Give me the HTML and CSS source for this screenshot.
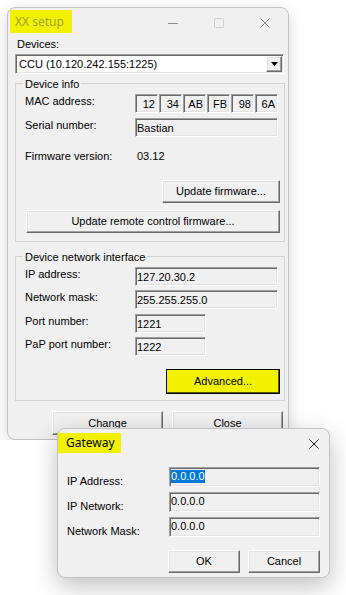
FILE: index.html
```html
<!DOCTYPE html>
<html lang="en">
<head>
  <title>XX setup</title>
  <meta charset="utf-8">
  <meta name="viewport" content="width=device-width, initial-scale=1">
  <link rel="stylesheet" href="styles.css">
</head>
<body>
  <div class="window setup">
    <div class="titlebar">
      <span class="title">XX setup</span>
      <span class="caption-buttons">
        <span class="caption-button">
          <svg width="10" height="10" viewBox="0 0 10 10"><path d="M0 5.5H10" stroke="#8c8c8c" stroke-width="1"/></svg>
        </span>
        <span class="caption-button">
          <svg width="10" height="10" viewBox="0 0 10 10"><rect x="0.5" y="0.5" width="9" height="9" rx="1" fill="none" stroke="#cfcfcf"/></svg>
        </span>
        <span class="caption-button">
          <svg width="10" height="10" viewBox="0 0 10 10"><path d="M0.5 0.5L9.5 9.5M9.5 0.5L0.5 9.5" stroke="#8c8c8c" stroke-width="1"/></svg>
        </span>
      </span>
    </div>

    <div class="content">
      <div class="devices-label">Devices:</div>
      <div class="combo">
        <span class="combo-value">CCU (10.120.242.155:1225)</span>
        <span class="combo-button">
          <svg width="7" height="4" viewBox="0 0 7 4"><path d="M0 0H7L3.5 4Z" fill="#000"/></svg>
        </span>
      </div>

      <div class="group">
        <div class="group-title">Device info</div>
        <div class="row first">
          <span class="label">MAC address:</span>
          <div class="mac">
            <span class="field">12</span>
            <span class="field">34</span>
            <span class="field">AB</span>
            <span class="field">FB</span>
            <span class="field">98</span>
            <span class="field">6A</span>
          </div>
        </div>
        <div class="row">
          <span class="label">Serial number:</span>
          <span class="field">Bastian</span>
        </div>
        <div class="row firmware">
          <span class="label">Firmware version:</span>
          <span class="value">03.12</span>
        </div>
        <button class="button update-firmware" type="button">Update firmware...</button>
        <button class="button update-remote" type="button">Update remote control firmware...</button>
      </div>

      <div class="group network">
        <div class="group-title">Device network interface</div>
        <div class="row first">
          <span class="label">IP address:</span>
          <span class="field">127.20.30.2</span>
        </div>
        <div class="row">
          <span class="label">Network mask:</span>
          <span class="field">255.255.255.0</span>
        </div>
        <div class="row wide-gap">
          <span class="label">Port number:</span>
          <span class="field short">1221</span>
        </div>
        <div class="row">
          <span class="label">PaP port number:</span>
          <span class="field short">1222</span>
        </div>
        <button class="button advanced" type="button">Advanced...</button>
      </div>

      <div class="dialog-buttons">
        <button class="button wide" type="button">Change</button>
        <button class="button wide" type="button">Close</button>
      </div>
    </div>
  </div>

  <div class="window gateway">
    <div class="titlebar">
      <span class="title">Gateway</span>
      <span class="caption-button close">
        <svg width="10" height="10" viewBox="0 0 10 10"><path d="M0.5 0.5L9.5 9.5M9.5 0.5L0.5 9.5" stroke="#1b1b1b" stroke-width="1"/></svg>
      </span>
    </div>
    <div class="content">
      <div class="row first">
        <span class="label">IP Address:</span>
        <span class="field"><span class="selected">0.0.0.0</span></span>
      </div>
      <div class="row">
        <span class="label">IP Network:</span>
        <span class="field">0.0.0.0</span>
      </div>
      <div class="row">
        <span class="label">Network Mask:</span>
        <span class="field">0.0.0.0</span>
      </div>
      <div class="dialog-buttons">
        <button class="button" type="button">OK</button>
        <button class="button" type="button">Cancel</button>
      </div>
    </div>
  </div>
</body>
</html>
```

FILE: styles.css
```css
body {
  background-color: #ffffff;
  color: #000000;
  font-family: "Liberation Sans", Arial, sans-serif;
  font-size: 11px;
  line-height: 13px;
  margin: 0;
  padding: 7px 0 0 7px;
}

.window {
  background-color: #f0f0f0;
  border: 1px solid #c2c2c2;
  border-radius: 8px;
  box-shadow: 0 4px 16px rgba(0, 0, 0, 0.16);
  box-sizing: border-box;
}

.titlebar {
  display: flex;
  height: 30px;
}

.title {
  background-color: #f2f200;
  box-sizing: border-box;
  font-family: "Noto Sans", sans-serif;
  font-size: 12px;
  height: 23px;
  line-height: 23px;
  margin: 2px 0 0 2px;
  padding-left: 5px;
  width: 62px;
}

.caption-buttons {
  display: flex;
  margin-left: auto;
}

.caption-button {
  align-items: center;
  display: flex;
  justify-content: center;
  width: 46px;
}

.button {
  background-color: #f0f0f0;
  border: 1px solid;
  border-color: #ffffff #696969 #696969 #ffffff;
  box-shadow: inset -1px -1px 0 #a0a0a0, inset 1px 1px 0 #e3e3e3;
  box-sizing: border-box;
  color: #000000;
  display: block;
  font: inherit;
  height: 23px;
  padding: 0;
}

.field {
  background-color: #f0f0f0;
  border: 1px solid;
  border-color: #a0a0a0 #ffffff #ffffff #a0a0a0;
  box-shadow: inset 1px 1px 0 #696969, inset -1px -1px 0 #e3e3e3;
  box-sizing: border-box;
  display: block;
  height: 19px;
  line-height: 18px;
  padding: 0 1px 0 1px;
  width: 143px;
}

/* XX setup */

.setup {
  height: 433px;
  width: 282px;
}

.setup .title {
  color: #a2a22a;
}

.setup .content {
  padding: 0 3px 0 7px;
}

.devices-label {
  padding-left: 2px;
}

.combo {
  align-items: center;
  background-color: #ffffff;
  border: 1px solid;
  border-color: #a0a0a0 #ffffff #ffffff #a0a0a0;
  box-shadow: inset 1px 1px 0 #696969, inset -1px -1px 0 #e3e3e3;
  box-sizing: border-box;
  display: flex;
  height: 20px;
  margin: 3px 1px 0 0;
  padding: 0 1px 0 3px;
}

.combo-button {
  align-items: center;
  background-color: #f0f0f0;
  border: 1px solid;
  border-color: #ffffff #696969 #696969 #ffffff;
  box-shadow: inset -1px -1px 0 #a0a0a0, inset 1px 1px 0 #e3e3e3;
  box-sizing: border-box;
  display: flex;
  height: 16px;
  justify-content: center;
  margin-left: auto;
  width: 16px;
}

.group {
  border: 1px solid #d3d3d3;
  margin-top: 9px;
  padding: 0 4px 8px 9px;
}

.group.network {
  margin-top: 14px;
  padding-bottom: 6px;
}

.group-title {
  background-color: #f0f0f0;
  margin: -6px 0 0 -2px;
  padding: 0 2px;
  width: fit-content;
}

.row {
  display: flex;
  margin-top: 5px;
}

.row.first {
  margin-top: 3px;
}

.network .row {
  margin-top: 4px;
}

.network .row.first {
  margin-top: 3px;
}

.network .row.wide-gap {
  margin-top: 5px;
}

.row .label {
  flex: none;
  padding-top: 1px;
  width: 110px;
}

.mac {
  display: flex;
  gap: 1px;
}

.mac .field {
  padding-right: 2px;
  text-align: right;
  width: 23px;
}

.field.short {
  width: 71px;
}

.row.firmware {
  margin-top: 13px;
}

.row.firmware .label {
  padding-top: 0;
}

.row .value {
  padding-left: 2px;
}

.update-firmware {
  margin: 17px 0 0 auto;
  width: 118px;
}

.update-remote {
  margin: 7px 0 0 auto;
  width: 254px;
}

.advanced {
  background-color: #f2f200;
  border-color: #000000;
  box-shadow: inset -1px -1px 0 #5c5c00;
  height: 25px;
  margin: 13px 0 0 auto;
  width: 114px;
}

.dialog-buttons {
  display: flex;
  gap: 9px;
  justify-content: flex-end;
  margin: 10px 2px 0 0;
}

.button.wide {
  height: 24px;
  width: 111px;
}

/* Gateway */

.gateway {
  box-shadow: 0 8px 24px rgba(0, 0, 0, 0.25);
  height: 150px;
  left: 57px;
  position: absolute;
  top: 428px;
  width: 273px;
}

.gateway .title {
  height: 20px;
  line-height: 20px;
  margin: 4px 0 0 0;
  padding-left: 8px;
  width: 63px;
}

.caption-button.close {
  margin-left: auto;
  width: 30px;
}

.gateway .content {
  padding: 0 9px;
}

.gateway .row {
  margin-top: 4px;
}

.gateway .row.first {
  margin-top: 8px;
}

.gateway .row .label {
  padding-top: 8px;
  width: 102px;
}

.gateway .field {
  height: 20px;
  line-height: 13px;
  padding: 2px 1px 0 1px;
  width: 151px;
}

.selected {
  background-color: #0078d7;
  color: #ffffff;
  display: inline-block;
}

.gateway .dialog-buttons {
  gap: 8px;
  margin: 12px 0 0 0;
}

.gateway .dialog-buttons .button {
  width: 72px;
}
```
